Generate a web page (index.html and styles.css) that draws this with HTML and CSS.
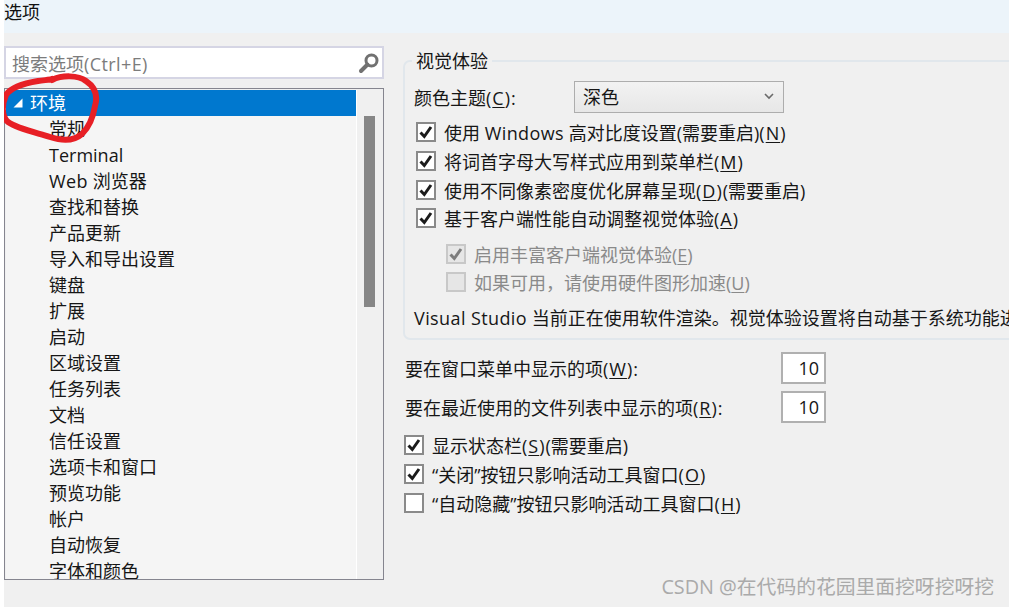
FILE: index.html
```html
<!DOCTYPE html>
<html lang="zh-CN">
<head>
<meta charset="utf-8">
<title>选项</title>
<link rel="stylesheet" href="styles.css">
</head>
<body>
<div class="window">
  <div class="titlebar">选项</div>
  <div class="content">
    <div class="left">
      <div class="search">
        <span class="search-text">搜索选项<span class="latin">(Ctrl+E)</span></span>
        <svg class="search-icon" width="22" height="22" viewBox="0 0 22 22"><circle cx="13.5" cy="8.5" r="5.5" fill="none" stroke="#717171" stroke-width="3"/><path d="M9.5 12.5L3 19" fill="none" stroke="#717171" stroke-width="4" stroke-linecap="round"/></svg>
      </div>
      <div class="tree">
        <div class="tree-list">
          <div class="tree-row selected">
            <svg class="twist" width="10" height="10" viewBox="0 0 10 10"><polygon points="9.5,0.5 9.5,9.5 0.5,9.5" fill="#fff"/></svg>
            <span>环境</span>
          </div>
          <div class="tree-row">常规</div>
          <div class="tree-row">Terminal</div>
          <div class="tree-row"><span class="latin">Web</span> 浏览器</div>
          <div class="tree-row">查找和替换</div>
          <div class="tree-row">产品更新</div>
          <div class="tree-row">导入和导出设置</div>
          <div class="tree-row">键盘</div>
          <div class="tree-row">扩展</div>
          <div class="tree-row">启动</div>
          <div class="tree-row">区域设置</div>
          <div class="tree-row">任务列表</div>
          <div class="tree-row">文档</div>
          <div class="tree-row">信任设置</div>
          <div class="tree-row">选项卡和窗口</div>
          <div class="tree-row">预览功能</div>
          <div class="tree-row">帐户</div>
          <div class="tree-row">自动恢复</div>
          <div class="tree-row">字体和颜色</div>
        </div>
        <div class="scrollbar"><div class="thumb"></div></div>
      </div>
    </div>
    <div class="right">
      <fieldset class="group">
        <legend class="group-title">视觉体验</legend>
        <div class="theme-row">
          <span class="theme-label">颜色主题<span class="key">(<u>C</u>)</span>:</span>
          <div class="select">
            <span>深色</span>
            <svg width="10" height="7" viewBox="0 0 10 7"><path d="M1 1l4 4 4-4" fill="none" stroke="#6a6a6a" stroke-width="1.6"/></svg>
          </div>
        </div>
        <div class="check-row inset">
          <span class="box"><svg viewBox="2 2 16 16"><path class="tick" d="M4.5 10.5l3.8 4L15 5"/></svg></span>
          <span>使用 <span class="latin">Windows</span> 高对比度设置(需要重启)<span class="key">(<u>N</u>)</span></span>
        </div>
        <div class="check-row inset">
          <span class="box"><svg viewBox="2 2 16 16"><path class="tick" d="M4.5 10.5l3.8 4L15 5"/></svg></span>
          <span>将词首字母大写样式应用到菜单栏<span class="key">(<u>M</u>)</span></span>
        </div>
        <div class="check-row inset">
          <span class="box"><svg viewBox="2 2 16 16"><path class="tick" d="M4.5 10.5l3.8 4L15 5"/></svg></span>
          <span>使用不同像素密度优化屏幕呈现<span class="key">(<u>D</u>)</span>(需要重启)</span>
        </div>
        <div class="check-row inset">
          <span class="box"><svg viewBox="2 2 16 16"><path class="tick" d="M4.5 10.5l3.8 4L15 5"/></svg></span>
          <span>基于客户端性能自动调整视觉体验<span class="key">(<u>A</u>)</span></span>
        </div>
        <div class="sub-group">
          <div class="check-row disabled">
            <span class="box"><svg viewBox="2 2 16 16"><path class="tick" d="M4.5 10.5l3.8 4L15 5"/></svg></span>
            <span>启用丰富客户端视觉体验(<u>E</u>)</span>
          </div>
          <div class="check-row disabled">
            <span class="box"></span>
            <span>如果可用，请使用硬件图形加速(<u>U</u>)</span>
          </div>
        </div>
        <div class="note"><span class="latin">Visual Studio</span> 当前正在使用软件渲染。视觉体验设置将自动基于系统功能进行调整。</div>
      </fieldset>
      <div class="count-row first">
        <span class="count-label">要在窗口菜单中显示的项<span class="key">(<u>W</u>)</span>:</span>
        <div class="count">10</div>
      </div>
      <div class="count-row">
        <span class="count-label">要在最近使用的文件列表中显示的项<span class="key">(<u>R</u>)</span>:</span>
        <div class="count">10</div>
      </div>
      <div class="bottom-checks">
        <div class="check-row">
          <span class="box"><svg viewBox="2 2 16 16"><path class="tick" d="M4.5 10.5l3.8 4L15 5"/></svg></span>
          <span>显示状态栏<span class="key">(<u>S</u>)</span>(需要重启)</span>
        </div>
        <div class="check-row">
          <span class="box"><svg viewBox="2 2 16 16"><path class="tick" d="M4.5 10.5l3.8 4L15 5"/></svg></span>
          <span>“关闭”按钮只影响活动工具窗口<span class="key">(<u>O</u>)</span></span>
        </div>
        <div class="check-row">
          <span class="box"></span>
          <span>“自动隐藏”按钮只影响活动工具窗口<span class="key">(<u>H</u>)</span></span>
        </div>
      </div>
    </div>
  </div>
  <svg class="scribble" width="110" height="150" viewBox="0 0 110 150"><path d="M52 80C62 75 78 75 86 81C95 87 98 96 95 106C93 118 88 128 82 134C74 141 62 141 50 137C38 133 18 129 8 122C1 116 2 104 6 95C11 87 26 83 38 81C44 80 50 80 52 79" fill="none" stroke="#e71f25" stroke-width="6" stroke-linecap="round"/></svg>
  <div class="watermark">CSDN @在代码的花园里面挖呀挖呀挖</div>
</div>
</body>
</html>
```
FILE: styles.css
```css
* { box-sizing: border-box; }
html, body { margin: 0; padding: 0; height: 100%; overflow: hidden; background: #fff; }
body {
  font-family: "Open Sans", "Noto Sans CJK SC", sans-serif;
  font-size: 18px;
  color: #161616;
}
u { text-underline-offset: 2px; text-decoration-thickness: 1px; }
.latin { letter-spacing: 0.4px; }
.key { letter-spacing: 1px; }
.window { position: relative; margin-left: 4px; height: 607px; background: #f0f0f0; overflow: hidden; }
.titlebar { height: 33px; background: #ecf4fa; line-height: 24px; color: #111; }
.content { display: flex; gap: 19px; padding-top: 13px; }
.left { width: 380px; flex: none; }
.search {
  height: 33px;
  background: #fff;
  border: 2px solid #d5d5e4;
  display: flex;
  align-items: center;
  justify-content: space-between;
  padding: 0 2px 0 6px;
}
.search-text { color: #7c7c7c; }
.tree {
  margin-top: 9px;
  height: 492px;
  border: 1px solid #85858f;
  padding: 1px 1px 0;
  display: flex;
  background: #f0f0f0;
}
.tree-list { flex: 1; min-width: 0; background: #f5f5f5; border-right: 1px solid #fff; overflow: hidden; }
.tree-row { height: 26px; line-height: 26px; padding-left: 43px; white-space: nowrap; color: #161616; }
.tree-row.selected { background: #0078cf; color: #fff; padding-left: 7px; display: flex; align-items: center; gap: 7px; }
.scrollbar { width: 25px; flex: none; padding: 26px 7px 0; }
.thumb { height: 191px; background: #868686; }
.right { flex: 1; min-width: 0; overflow: hidden; padding-top: 3px; }
.group {
  width: 720px;
  margin: 0;
  padding: 8px 0 6px 9px;
  height: 291px;
  border: 2px solid #e1e7ec;
  border-radius: 7px;
}
.group-title { padding: 0 4px; margin-left: -2px; line-height: 24px; }
.theme-row { display: flex; align-items: center; }
.theme-label { width: 160px; }
.select {
  width: 210px;
  height: 32px;
  border: 1px solid #adadad;
  background: linear-gradient(#f2f2f2, #e7e7e7);
  display: flex;
  align-items: center;
  justify-content: space-between;
  padding: 0 9px 2px 8px;
}
.check-row { height: 28.7px; display: flex; align-items: center; gap: 8px; white-space: nowrap; }
.inset { margin-left: 2px; }
.theme-row + .inset { margin-top: 5px; }
.box { width: 20px; height: 20px; flex: none; background: #fff; border: 2px solid #8a8a8a; display: block; }
.box svg { display: block; width: 16px; height: 16px; }
.tick { fill: none; stroke: #1b1b1b; stroke-width: 3; }
.sub-group { margin: 6.5px 0 0 32px; }
.disabled { color: #8a8a8a; }
.disabled .box { background: #e6e6e6; border-color: #c8c8c8; }
.disabled .tick { stroke: #7d7d7d; }
.note { margin-top: 7.5px; height: 28px; line-height: 28px; white-space: nowrap; }
.count-row { display: flex; align-items: center; margin-top: 7px; padding-left: 2px; }
.count-row.first { margin-top: 12px; }
.count-label { width: 376px; }
.count {
  width: 45px;
  height: 32px;
  background: #fff;
  border: 2px solid #b0b0b0;
  text-align: right;
  padding-right: 5px;
  line-height: 28px;
}
.bottom-checks { margin-top: 8px; padding-left: 1px; }
.scribble { position: absolute; left: -4px; top: 0; pointer-events: none; }
.watermark {
  position: absolute;
  right: 15px;
  top: 574px;
  font-size: 19.8px;
  line-height: 26px;
  color: #aaa;
  white-space: nowrap;
}
```
